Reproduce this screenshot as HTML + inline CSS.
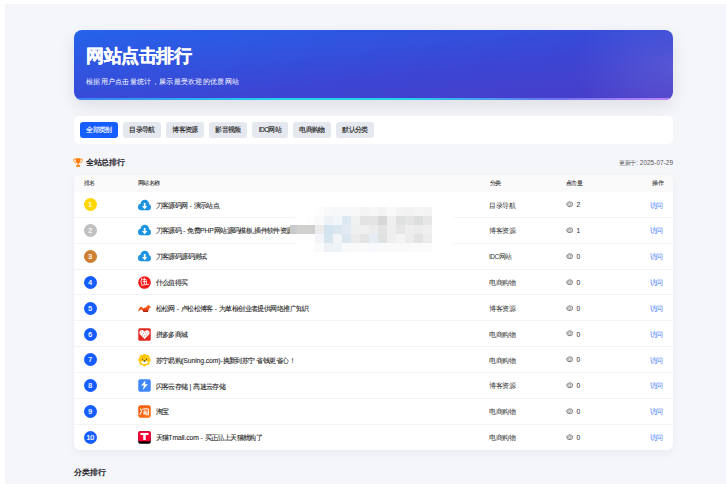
<!DOCTYPE html>
<html><head><meta charset="utf-8">
<style>
*{box-sizing:border-box;margin:0;padding:0}
html,body{width:726px;height:487px;overflow:hidden;background:#fff;font-family:"Liberation Sans",sans-serif}
#bg{position:absolute;left:5px;top:4px;width:721px;height:480px;background:#f5f6fa}
.abs{position:absolute}
#hero{left:74px;top:30px;width:599px;height:70px;border-radius:8px;overflow:hidden;
 background:radial-gradient(ellipse 100px 70px at 100% 55%,rgba(255,255,255,.11),rgba(255,255,255,0)),linear-gradient(to bottom right,#2563eb 0%,#3c45d3 60%,#4a3cc8 100%);box-shadow:0 6px 16px rgba(20,30,60,.10)}
#hero .line{position:absolute;left:0;bottom:0;width:100%;height:2px;background:linear-gradient(90deg,#3b82f6 0%,#22d3ee 35%,#22d3ee 55%,#6d73f0 80%,#c084fc 100%)}
#hero h1{position:absolute;left:12px;top:16px;font-size:17.5px;letter-spacing:-0.5px;line-height:20px;color:#fff;font-weight:bold;-webkit-text-stroke:0.35px #fff}
#hero p{position:absolute;left:12px;top:46.5px;font-size:7.2px;letter-spacing:0.3px;line-height:9px;color:rgba(255,255,255,.92);-webkit-text-stroke:0.1px rgba(255,255,255,.6)}
#tabs{left:74px;top:116px;width:599px;height:28px;border-radius:5px;background:#fff}
.tab{position:absolute;top:6px;height:16px;border-radius:3px;background:#e5e8ee;color:#1a1a1a;-webkit-text-stroke:0.12px #1a1a1a;font-size:6.5px;letter-spacing:-0.55px;line-height:16px;text-align:center}
.tab.on{background:#165dff;color:#fff;-webkit-text-stroke:0.12px #fff}
#sect{left:73px;top:156px;height:12px}
#upd{right:53px;top:158.5px;font-size:6px;letter-spacing:-0.3px;line-height:7px;color:#555}#upd span{font-size:6.4px;letter-spacing:0.05px}
#card{left:74px;top:174.5px;width:599px;height:275.6px;border-radius:6px;background:#fff;overflow:hidden;box-shadow:0 3px 10px rgba(20,30,60,.05)}
.th{position:absolute;left:0;top:0;width:100%;height:17.5px;background:#fafafa}
.th span{position:absolute;top:5.4px;font-size:6px;letter-spacing:-0.6px;line-height:7px;color:#2a2a2a;-webkit-text-stroke:0.06px #2a2a2a}
.row{position:absolute;left:0;width:100%;height:25.85px;border-bottom:1px solid #f2f3f6}
.rk{position:absolute;left:9.8px;top:6.3px;width:13px;height:13px;border-radius:50%;background:#165dff;color:#fff;font-size:7px;line-height:13px;text-align:center;-webkit-text-stroke:0.2px #fff}
.ic{position:absolute;left:64px;top:6.5px;width:13px;height:13px}
.nm{position:absolute;left:81.5px;top:9.6px;font-size:6.5px;letter-spacing:-0.58px;line-height:8px;color:#2a2a2a;-webkit-text-stroke:0.1px #2a2a2a;white-space:nowrap}
.ct{position:absolute;left:415px;top:9.5px;font-size:6.5px;letter-spacing:-0.5px;line-height:8px;color:#333}
.eye{position:absolute;left:491.5px;top:9.2px;width:7.6px;height:6.4px}
.cnt{position:absolute;left:502.5px;top:9.3px;font-size:6.5px;line-height:8px;color:#333;-webkit-text-stroke:0.05px #333}
.go{position:absolute;right:10.3px;top:9.5px;font-size:6.5px;letter-spacing:-0.8px;line-height:8px;color:#3577ff}
.nm .l{font-size:6.8px;letter-spacing:-0.1px}.nm .d{letter-spacing:0}
#sec2{left:74px;top:467.5px;font-size:8px;letter-spacing:-0.15px;line-height:10px;font-weight:bold;color:#1d2129}
</style></head><body>
<div id="bg"></div>
<div id="hero" class="abs">
 <h1>网站点击排行</h1>
 <p>根据用户点击量统计，展示最受欢迎的优质网站</p>
 <div class="line"></div>
</div>
<div id="tabs" class="abs">
 <div class="tab on" style="left:6px;width:38px">全部类别</div>
 <div class="tab" style="left:49px;width:38px">目录导航</div>
 <div class="tab" style="left:92px;width:38px">博客资源</div>
 <div class="tab" style="left:135px;width:38px">影音视频</div>
 <div class="tab" style="left:178px;width:36px">IDC网站</div>
 <div class="tab" style="left:219px;width:38px">电商购物</div>
 <div class="tab" style="left:262px;width:38px">默认分类</div>
</div>
<div id="sect" class="abs">
 <svg class="abs" style="left:0;top:1.9px" width="10" height="9" viewBox="0 0 20 18"><g fill="#ff7d00"><path d="M5.4 0.4H14.9V5C14.9 8.6 12.8 11.6 10.15 12 7.5 11.6 5.4 8.6 5.4 5Z"/><path d="M9 11.5H11.3V14.4H9Z"/><path d="M6.2 14.2H14.1V17.6H6.2Z"/></g><g fill="none" stroke="#ff8a1a" stroke-width="1.7"><path d="M5.6 2.4H1.4V4.9C1.4 7.5 3.3 9.5 5.9 9.7"/><path d="M14.7 2.4H18.9V4.9C18.9 7.5 17 9.5 14.4 9.7"/></g></svg>
 <div class="abs" style="left:13px;top:2.3px;font-size:7.7px;letter-spacing:-0.3px;line-height:10px;font-weight:bold;color:#1d2129;white-space:nowrap">全站总排行</div>
</div>
<div id="upd" class="abs">更新于<span>: 2025-07-29</span></div>
<div id="card" class="abs">
 <div class="th"><span style="left:9.5px">排名</span><span style="left:64px">网站名称</span><span style="left:416px">分类</span><span style="left:492px">点击量</span><span style="right:10px">操作</span></div>
 <div class="row" style="top:17.50px"><div class="rk" style="background:#ffd700">1</div><svg class="ic" viewBox="0 0 26 26"><g fill="#1e93e0"><circle cx="6.6" cy="15.9" r="6.6"/><circle cx="13.6" cy="10" r="8.6"/><circle cx="19.6" cy="16.3" r="6.3"/><rect x="6.6" y="13" width="13" height="9.5"/></g><path fill="#fff" d="M11.6 8h3.4v6h3.6L13.3 20.6 8 14h3.6z"/></svg><div class="nm">刀客源码网<span class="l d"> - </span>演示站点</div><div class="ct">目录导航</div><svg class="eye" viewBox="0 0 16 13"><path fill="none" stroke="#8c8c8c" stroke-width="2.3" d="M1.3 6.5C3.2 3 5.5 1.3 8 1.3S12.8 3 14.7 6.5C12.8 10 10.5 11.7 8 11.7S3.2 10 1.3 6.5z"/><circle cx="8" cy="6.5" r="2.6" fill="none" stroke="#8c8c8c" stroke-width="1.6"/></svg><div class="cnt">2</div><div class="go">访问</div></div>
 <div class="row" style="top:43.35px"><div class="rk" style="background:#c0c0c0">2</div><svg class="ic" viewBox="0 0 26 26"><g fill="#1e93e0"><circle cx="6.6" cy="15.9" r="6.6"/><circle cx="13.6" cy="10" r="8.6"/><circle cx="19.6" cy="16.3" r="6.3"/><rect x="6.6" y="13" width="13" height="9.5"/></g><path fill="#fff" d="M11.6 8h3.4v6h3.6L13.3 20.6 8 14h3.6z"/></svg><div class="nm">刀客源码<span class="l d"> - </span>免费<span class="l">PHP</span>网站源码模板<span class="l">,</span>插件软件资源</div><div class="ct">博客资源</div><svg class="eye" viewBox="0 0 16 13"><path fill="none" stroke="#8c8c8c" stroke-width="2.3" d="M1.3 6.5C3.2 3 5.5 1.3 8 1.3S12.8 3 14.7 6.5C12.8 10 10.5 11.7 8 11.7S3.2 10 1.3 6.5z"/><circle cx="8" cy="6.5" r="2.6" fill="none" stroke="#8c8c8c" stroke-width="1.6"/></svg><div class="cnt">1</div><div class="go">访问</div></div>
 <div class="row" style="top:69.20px"><div class="rk" style="background:#cd7f32">3</div><svg class="ic" viewBox="0 0 26 26"><g fill="#1e93e0"><circle cx="6.6" cy="15.9" r="6.6"/><circle cx="13.6" cy="10" r="8.6"/><circle cx="19.6" cy="16.3" r="6.3"/><rect x="6.6" y="13" width="13" height="9.5"/></g><path fill="#fff" d="M11.6 8h3.4v6h3.6L13.3 20.6 8 14h3.6z"/></svg><div class="nm">刀客源码源码测试</div><div class="ct">IDC网站</div><svg class="eye" viewBox="0 0 16 13"><path fill="none" stroke="#8c8c8c" stroke-width="2.3" d="M1.3 6.5C3.2 3 5.5 1.3 8 1.3S12.8 3 14.7 6.5C12.8 10 10.5 11.7 8 11.7S3.2 10 1.3 6.5z"/><circle cx="8" cy="6.5" r="2.6" fill="none" stroke="#8c8c8c" stroke-width="1.6"/></svg><div class="cnt">0</div><div class="go">访问</div></div>
 <div class="row" style="top:95.05px"><div class="rk" style="background:#165dff">4</div><svg class="ic" viewBox="0 0 26 26"><circle cx="13" cy="13" r="12.6" fill="#f51616"/><g fill="none" stroke="#fff" stroke-width="1.7" stroke-linecap="round" stroke-linejoin="round"><path d="M7.8 4.6 6 10.5 7.2 16.6"/><path d="M12.6 4v12.4M10 7.2h6M16.6 9.8v6.4M10.2 11h6.4"/><path d="M7.4 18.6C11 18 15 17.2 21.2 16.6"/></g></svg><div class="nm">什么值得买</div><div class="ct">电商购物</div><svg class="eye" viewBox="0 0 16 13"><path fill="none" stroke="#8c8c8c" stroke-width="2.3" d="M1.3 6.5C3.2 3 5.5 1.3 8 1.3S12.8 3 14.7 6.5C12.8 10 10.5 11.7 8 11.7S3.2 10 1.3 6.5z"/><circle cx="8" cy="6.5" r="2.6" fill="none" stroke="#8c8c8c" stroke-width="1.6"/></svg><div class="cnt">0</div><div class="go">访问</div></div>
 <div class="row" style="top:120.90px"><div class="rk" style="background:#165dff">5</div><svg class="ic" viewBox="0 0 26 26"><defs><linearGradient id="sq" x1="0" y1="0" x2="0" y2="1"><stop offset="0" stop-color="#ff7015"/><stop offset=".55" stop-color="#f0501a"/><stop offset="1" stop-color="#b8160c"/></linearGradient></defs><path fill="url(#sq)" d="M0.6 18.3C1.5 13 4 9.4 6 9.4 8 9.4 9.5 11.5 10.5 13 12 11.5 14 10.5 15.7 10.4 17.5 9 19 6 21 5.8L22.8 6.8 26 11 22.3 13C21.5 15 20.8 17 19.7 20H10.5C10 17.5 8 15 6.5 15 4.5 15 3 17 1.9 18.6Z"/></svg><div class="nm">松松网<span class="l d"> - </span>卢松松博客<span class="l d"> - </span>为草根创业者提供网络推广知识</div><div class="ct">博客资源</div><svg class="eye" viewBox="0 0 16 13"><path fill="none" stroke="#8c8c8c" stroke-width="2.3" d="M1.3 6.5C3.2 3 5.5 1.3 8 1.3S12.8 3 14.7 6.5C12.8 10 10.5 11.7 8 11.7S3.2 10 1.3 6.5z"/><circle cx="8" cy="6.5" r="2.6" fill="none" stroke="#8c8c8c" stroke-width="1.6"/></svg><div class="cnt">0</div><div class="go">访问</div></div>
 <div class="row" style="top:146.75px"><div class="rk" style="background:#165dff">6</div><svg class="ic" viewBox="0 0 26 26"><rect x="0.5" y="0.5" width="25" height="25" rx="3" fill="#e02a22"/><path fill="#fff" d="M13.4 22 4.2 13C1.8 10.6 2.6 4.8 7.2 4.2 9.8 3.9 11.8 5.4 13 7.2 14.4 5.4 16.6 4 19.2 4.4 23.6 5 24.4 10.6 22 13z"/><g fill="#e02a22" opacity=".45"><rect x="6" y="7" width="2" height="2"/><rect x="10" y="10" width="2.2" height="2"/><rect x="14" y="8" width="2" height="2"/><rect x="17" y="11" width="2" height="2.2"/><rect x="8" y="13" width="2" height="2"/><rect x="12" y="15" width="2" height="2"/><rect x="15" y="14" width="2" height="2"/><rect x="19" y="7" width="2" height="2"/></g></svg><div class="nm">拼多多商城</div><div class="ct">电商购物</div><svg class="eye" viewBox="0 0 16 13"><path fill="none" stroke="#8c8c8c" stroke-width="2.3" d="M1.3 6.5C3.2 3 5.5 1.3 8 1.3S12.8 3 14.7 6.5C12.8 10 10.5 11.7 8 11.7S3.2 10 1.3 6.5z"/><circle cx="8" cy="6.5" r="2.6" fill="none" stroke="#8c8c8c" stroke-width="1.6"/></svg><div class="cnt">0</div><div class="go">访问</div></div>
 <div class="row" style="top:172.60px"><div class="rk" style="background:#165dff">7</div><svg class="ic" viewBox="0 0 26 26"><path fill="#ffc80a" d="M13.00 -0.65 13.66 -0.56 14.29 -0.30 14.89 0.09 15.43 0.54 15.94 1.01 16.43 1.43 16.93 1.76 17.46 1.98 18.04 2.10 18.69 2.15 19.38 2.18 20.09 2.24 20.78 2.39 21.42 2.65 21.94 3.06 22.35 3.58 22.61 4.22 22.76 4.91 22.82 5.62 22.85 6.31 22.90 6.96 23.02 7.54 23.24 8.07 23.57 8.57 23.99 9.06 24.46 9.57 24.91 10.11 25.30 10.71 25.56 11.34 25.65 12.00 25.56 12.66 25.30 13.29 24.91 13.89 24.46 14.43 23.99 14.94 23.57 15.43 23.24 15.93 23.02 16.46 22.90 17.04 22.85 17.69 22.82 18.38 22.76 19.09 22.61 19.78 22.35 20.42 21.94 20.94 21.42 21.35 20.78 21.61 20.09 21.76 19.38 21.82 18.69 21.85 18.04 21.90 17.46 22.02 16.93 22.24 16.43 22.57 15.94 22.99 15.43 23.46 14.89 23.91 14.29 24.30 13.66 24.56 13.00 24.65 12.34 24.56 11.71 24.30 11.11 23.91 10.57 23.46 10.06 22.99 9.57 22.57 9.07 22.24 8.54 22.02 7.96 21.90 7.31 21.85 6.62 21.82 5.91 21.76 5.22 21.61 4.58 21.35 4.06 20.94 3.65 20.42 3.39 19.78 3.24 19.09 3.18 18.38 3.15 17.69 3.10 17.04 2.98 16.46 2.76 15.93 2.43 15.43 2.01 14.94 1.54 14.43 1.09 13.89 0.70 13.29 0.44 12.66 0.35 12.00 0.44 11.34 0.70 10.71 1.09 10.11 1.54 9.57 2.01 9.06 2.43 8.57 2.76 8.07 2.98 7.54 3.10 6.96 3.15 6.31 3.18 5.62 3.24 4.91 3.39 4.22 3.65 3.58 4.06 3.06 4.58 2.65 5.22 2.39 5.91 2.24 6.62 2.18 7.31 2.15 7.96 2.10 8.54 1.98 9.07 1.76 9.57 1.43 10.06 1.01 10.57 0.54 11.11 0.09 11.71 -0.30 12.34 -0.56Z"/><path fill="#fff" d="M5.4 15.6C7.5 14.6 10 14 13 14s5.5.6 7.6 1.6C20 18.6 17 20.2 13 20.2S6 18.6 5.4 15.6z"/><ellipse cx="13" cy="14.2" rx="2.1" ry="1.5" fill="#2a2a3a"/><ellipse cx="9" cy="10.4" rx="1" ry="1.4" fill="#3a3020"/><ellipse cx="17" cy="10.4" rx="1" ry="1.4" fill="#3a3020"/></svg><div class="nm">苏宁易购<span class="l">(Suning.com)-</span>换新到苏宁<span class="l"> </span>省钱更省心！</div><div class="ct">电商购物</div><svg class="eye" viewBox="0 0 16 13"><path fill="none" stroke="#8c8c8c" stroke-width="2.3" d="M1.3 6.5C3.2 3 5.5 1.3 8 1.3S12.8 3 14.7 6.5C12.8 10 10.5 11.7 8 11.7S3.2 10 1.3 6.5z"/><circle cx="8" cy="6.5" r="2.6" fill="none" stroke="#8c8c8c" stroke-width="1.6"/></svg><div class="cnt">0</div><div class="go">访问</div></div>
 <div class="row" style="top:198.45px"><div class="rk" style="background:#165dff">8</div><svg class="ic" viewBox="0 0 26 26"><rect x="0.5" y="0.5" width="25" height="25" rx="3.5" fill="#3f87f9"/><path fill="#fff" d="M14.8 3.2 6.3 13.2H12L9.4 22.2 19.9 10.4H14.3z"/></svg><div class="nm">闪客云存储<span class="l d"> | </span>高速云存储</div><div class="ct">博客资源</div><svg class="eye" viewBox="0 0 16 13"><path fill="none" stroke="#8c8c8c" stroke-width="2.3" d="M1.3 6.5C3.2 3 5.5 1.3 8 1.3S12.8 3 14.7 6.5C12.8 10 10.5 11.7 8 11.7S3.2 10 1.3 6.5z"/><circle cx="8" cy="6.5" r="2.6" fill="none" stroke="#8c8c8c" stroke-width="1.6"/></svg><div class="cnt">0</div><div class="go">访问</div></div>
 <div class="row" style="top:224.30px"><div class="rk" style="background:#165dff">9</div><svg class="ic" viewBox="0 0 26 26"><defs><linearGradient id="tb" x1="0" y1="0" x2="1" y2="1"><stop offset="0" stop-color="#f25a12"/><stop offset="1" stop-color="#ff7010"/></linearGradient></defs><rect x="0.5" y="0.5" width="25" height="25" rx="4.5" fill="url(#tb)"/><g fill="none" stroke="#fff" stroke-width="2.1" stroke-linecap="round"><path d="M9 8.6C12 7.4 17 7.2 20.6 7.8V19.6H15.6"/><path d="M10.8 13.9H18.2M14.2 10.4V17.6M11 17.6H18"/><path d="M3.6 19 7 13.4M5 9.6 7.2 10.4"/></g><circle cx="4.9" cy="6.8" r="1.3" fill="#ffd200"/></svg><div class="nm">淘宝</div><div class="ct">电商购物</div><svg class="eye" viewBox="0 0 16 13"><path fill="none" stroke="#8c8c8c" stroke-width="2.3" d="M1.3 6.5C3.2 3 5.5 1.3 8 1.3S12.8 3 14.7 6.5C12.8 10 10.5 11.7 8 11.7S3.2 10 1.3 6.5z"/><circle cx="8" cy="6.5" r="2.6" fill="none" stroke="#8c8c8c" stroke-width="1.6"/></svg><div class="cnt">0</div><div class="go">访问</div></div>
 <div class="row" style="top:250.15px;border-bottom:0"><div class="rk" style="background:#165dff">10</div><svg class="ic" viewBox="0 0 26 26"><rect x="0.5" y="0.5" width="25" height="25" rx="3.5" fill="#000"/><path fill="#ff0036" d="M0.5 4a3.5 3.5 0 0 1 3.5-3.5h18a3.5 3.5 0 0 1 3.5 3.5v14.5c0 1.5-1.5 2-3 2H3.5c-1.5 0-3-.5-3-2z"/><path fill="#fff" d="M5 3.8h16v4.3h-5.5V18h-5V8.1H5z"/></svg><div class="nm">天猫<span class="l">Tmall.com - </span>买正品上天猫就购了</div><div class="ct">电商购物</div><svg class="eye" viewBox="0 0 16 13"><path fill="none" stroke="#8c8c8c" stroke-width="2.3" d="M1.3 6.5C3.2 3 5.5 1.3 8 1.3S12.8 3 14.7 6.5C12.8 10 10.5 11.7 8 11.7S3.2 10 1.3 6.5z"/><circle cx="8" cy="6.5" r="2.6" fill="none" stroke="#8c8c8c" stroke-width="1.6"/></svg><div class="cnt">0</div><div class="go">访问</div></div>
</div>
<div id="mosaic"><div class="abs" style="left:300px;top:205px;width:150px;height:47px;background:#fff;box-shadow:0 0 5px 4px #fff"></div><div class="abs" style="left:290px;top:225px;width:7px;height:9px;background:#c9cacb"></div><div class="abs" style="left:297px;top:225px;width:9px;height:9px;background:#d0d0ce"></div><div class="abs" style="left:315px;top:207px;width:9px;height:9px;background:#fdfdfd"></div><div class="abs" style="left:324px;top:207px;width:9px;height:9px;background:#f7f9fb"></div><div class="abs" style="left:333px;top:207px;width:9px;height:9px;background:#f6f9fc"></div><div class="abs" style="left:342px;top:207px;width:9px;height:9px;background:#f7f9fb"></div><div class="abs" style="left:351px;top:207px;width:9px;height:9px;background:#f8f8f8"></div><div class="abs" style="left:360px;top:207px;width:9px;height:9px;background:#f4f4f4"></div><div class="abs" style="left:369px;top:207px;width:9px;height:9px;background:#f7f7f7"></div><div class="abs" style="left:378px;top:207px;width:9px;height:9px;background:#f3f3f3"></div><div class="abs" style="left:387px;top:207px;width:9px;height:9px;background:#f9f9f9"></div><div class="abs" style="left:396px;top:207px;width:9px;height:9px;background:#f4f4f4"></div><div class="abs" style="left:405px;top:207px;width:9px;height:9px;background:#f2f2f2"></div><div class="abs" style="left:414px;top:207px;width:9px;height:9px;background:#f5f5f5"></div><div class="abs" style="left:423px;top:207px;width:9px;height:9px;background:#f3f3f3"></div><div class="abs" style="left:306px;top:216px;width:9px;height:9px;background:#fdfdfd"></div><div class="abs" style="left:315px;top:216px;width:9px;height:9px;background:#fafafa"></div><div class="abs" style="left:324px;top:216px;width:9px;height:9px;background:#eef3f8"></div><div class="abs" style="left:333px;top:216px;width:9px;height:9px;background:#f2f6fa"></div><div class="abs" style="left:342px;top:216px;width:9px;height:9px;background:#dce9f3"></div><div class="abs" style="left:351px;top:216px;width:9px;height:9px;background:#f0f2f2"></div><div class="abs" style="left:360px;top:216px;width:9px;height:9px;background:#e3e3e3"></div><div class="abs" style="left:369px;top:216px;width:9px;height:9px;background:#e4e4e4"></div><div class="abs" style="left:378px;top:216px;width:9px;height:9px;background:#d7d7d7"></div><div class="abs" style="left:387px;top:216px;width:9px;height:9px;background:#efefef"></div><div class="abs" style="left:396px;top:216px;width:9px;height:9px;background:#dfe0e0"></div><div class="abs" style="left:405px;top:216px;width:9px;height:9px;background:#e5e5e5"></div><div class="abs" style="left:414px;top:216px;width:9px;height:9px;background:#dcdddd"></div><div class="abs" style="left:423px;top:216px;width:9px;height:9px;background:#e6e6e6"></div><div class="abs" style="left:306px;top:225px;width:9px;height:9px;background:#cfcfcd"></div><div class="abs" style="left:315px;top:225px;width:9px;height:9px;background:#ececec"></div><div class="abs" style="left:324px;top:225px;width:9px;height:9px;background:#d3e4f0"></div><div class="abs" style="left:333px;top:225px;width:9px;height:9px;background:#dae7f0"></div><div class="abs" style="left:342px;top:225px;width:9px;height:9px;background:#e3eaf1"></div><div class="abs" style="left:351px;top:225px;width:9px;height:9px;background:#eeefef"></div><div class="abs" style="left:360px;top:225px;width:9px;height:9px;background:#f0f0f0"></div><div class="abs" style="left:369px;top:225px;width:9px;height:9px;background:#ececec"></div><div class="abs" style="left:378px;top:225px;width:9px;height:9px;background:#e4e4e4"></div><div class="abs" style="left:387px;top:225px;width:9px;height:9px;background:#efefef"></div><div class="abs" style="left:396px;top:225px;width:9px;height:9px;background:#e6e6e6"></div><div class="abs" style="left:405px;top:225px;width:9px;height:9px;background:#eeeeee"></div><div class="abs" style="left:414px;top:225px;width:9px;height:9px;background:#ececec"></div><div class="abs" style="left:423px;top:225px;width:9px;height:9px;background:#efefef"></div><div class="abs" style="left:315px;top:234px;width:9px;height:9px;background:#f4f5f8"></div><div class="abs" style="left:324px;top:234px;width:9px;height:9px;background:#d6e5f0"></div><div class="abs" style="left:333px;top:234px;width:9px;height:9px;background:#f2f4f8"></div><div class="abs" style="left:342px;top:234px;width:9px;height:9px;background:#dae7f0"></div><div class="abs" style="left:351px;top:234px;width:9px;height:9px;background:#ebebeb"></div><div class="abs" style="left:360px;top:234px;width:9px;height:9px;background:#e4e4e4"></div><div class="abs" style="left:369px;top:234px;width:9px;height:9px;background:#e6edf5"></div><div class="abs" style="left:378px;top:234px;width:9px;height:9px;background:#e0e2e2"></div><div class="abs" style="left:387px;top:234px;width:9px;height:9px;background:#efefef"></div><div class="abs" style="left:396px;top:234px;width:9px;height:9px;background:#f4f4f4"></div><div class="abs" style="left:405px;top:234px;width:9px;height:9px;background:#ececec"></div><div class="abs" style="left:414px;top:234px;width:9px;height:9px;background:#e2e2e2"></div><div class="abs" style="left:423px;top:234px;width:9px;height:9px;background:#ececec"></div><div class="abs" style="left:315px;top:243px;width:9px;height:9px;background:#fafafa"></div><div class="abs" style="left:324px;top:243px;width:9px;height:9px;background:#eef2f7"></div><div class="abs" style="left:333px;top:243px;width:9px;height:9px;background:#eff3f8"></div><div class="abs" style="left:342px;top:243px;width:9px;height:9px;background:#f8f9fb"></div><div class="abs" style="left:351px;top:243px;width:9px;height:9px;background:#fafafa"></div><div class="abs" style="left:360px;top:243px;width:9px;height:9px;background:#fafafa"></div><div class="abs" style="left:369px;top:243px;width:9px;height:9px;background:#f7f9fc"></div><div class="abs" style="left:378px;top:243px;width:9px;height:9px;background:#fafafa"></div><div class="abs" style="left:387px;top:243px;width:9px;height:9px;background:#fafafa"></div><div class="abs" style="left:396px;top:243px;width:9px;height:9px;background:#fafafa"></div><div class="abs" style="left:405px;top:243px;width:9px;height:9px;background:#fafafa"></div><div class="abs" style="left:414px;top:243px;width:9px;height:9px;background:#fbfbfb"></div><div class="abs" style="left:423px;top:243px;width:9px;height:9px;background:#fbfbfb"></div></div>
<div id="sec2" class="abs">分类排行</div>
</body></html>
